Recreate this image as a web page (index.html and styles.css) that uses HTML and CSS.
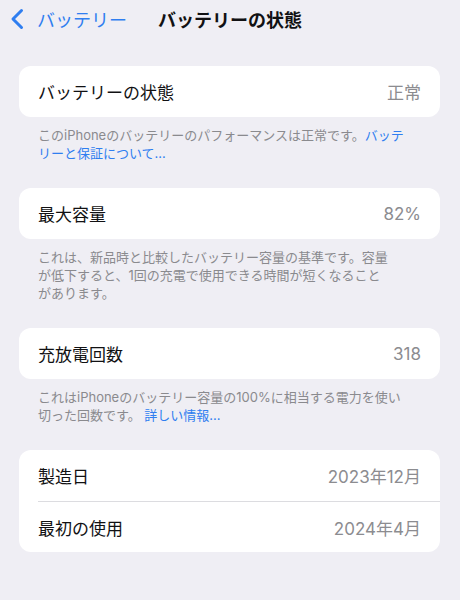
FILE: index.html
```html
<!DOCTYPE html>
<html lang="ja">
<head>
  <meta charset="UTF-8" />
  <meta name="viewport" content="width=device-width, initial-scale=1.0" />
  <title>バッテリーの状態</title>
  <link rel="stylesheet" href="styles.css">
</head>
<body>

  <div class="nav">
    <a class="back" href="#">
      <svg class="chevron" width="14" height="22" viewBox="0 0 14 22">
        <polyline points="11.5,2.5 3,11 11.5,19.5" fill="none" stroke="currentColor" stroke-width="3" stroke-linecap="round" stroke-linejoin="round" />
      </svg>
      <span>バッテリー</span>
    </a>
    <h1 class="title">バッテリーの状態</h1>
    <div></div>
  </div>

  <div class="content">

    <div class="section">
      <div class="card">
        <div class="row">
          <span class="label">バッテリーの状態</span>
          <span class="value">正常</span>
        </div>
      </div>
      <p class="footer">このiPhoneのバッテリーのパフォーマンスは正常です。<a href="#">バッテ<br>リーと保証について...</a></p>
    </div>

    <div class="section">
      <div class="card">
        <div class="row">
          <span class="label">最大容量</span>
          <span class="value">82%</span>
        </div>
      </div>
      <p class="footer">これは、新品時と比較したバッテリー容量の基準です。容量<br>が低下すると、1回の充電で使用できる時間が短くなること<br>があります。</p>
    </div>

    <div class="section">
      <div class="card">
        <div class="row">
          <span class="label">充放電回数</span>
          <span class="value">318</span>
        </div>
      </div>
      <p class="footer">これはiPhoneのバッテリー容量の100%に相当する電力を使い<br>切った回数です。 <a href="#">詳しい情報...</a></p>
    </div>

    <div class="section">
      <div class="card">
        <div class="row">
          <span class="label">製造日</span>
          <span class="value">2023年12月</span>
        </div>
        <div class="row">
          <span class="label">最初の使用</span>
          <span class="value">2024年4月</span>
        </div>
      </div>
    </div>

  </div>

</body>
</html>
```

FILE: styles.css
```css
html, body {
  margin: 0;
  padding: 0;
}

body {
  background: #efeef4;
  font-family: Inter, "Noto Sans CJK JP", sans-serif;
  color: #111113;
  height: 600px;
  overflow: hidden;
}

a {
  color: #2f7ef0;
  text-decoration: none;
}

.nav {
  display: grid;
  grid-template-columns: 1fr auto 1fr;
  align-items: center;
  height: 38px;
  padding: 0 10px;
}

.back {
  display: flex;
  align-items: center;
  gap: 13px;
  font-size: 18px;
}

.chevron {
  display: block;
}

.title {
  margin: 0;
  font-size: 18px;
  font-weight: 700;
}

.content {
  padding: 28px 20px 0 19px;
}

.section {
  margin-bottom: 26px;
}

.card {
  background: #fff;
  border-radius: 12px;
  overflow: hidden;
}

.row {
  display: flex;
  justify-content: space-between;
  align-items: center;
  height: 51px;
  padding: 0 19px;
  font-size: 17px;
  position: relative;
}

.row + .row {
  border-top: 1px solid #dcdce0;
  height: 50px;
  margin-left: 19px;
  padding-left: 0;
}

.value {
  color: #8c8c90;
}

.footer {
  margin: 0;
  padding: 9px 19px 0;
  font-size: 13px;
  line-height: 18px;
  color: #8a8a8e;
  white-space: nowrap;
}
```
